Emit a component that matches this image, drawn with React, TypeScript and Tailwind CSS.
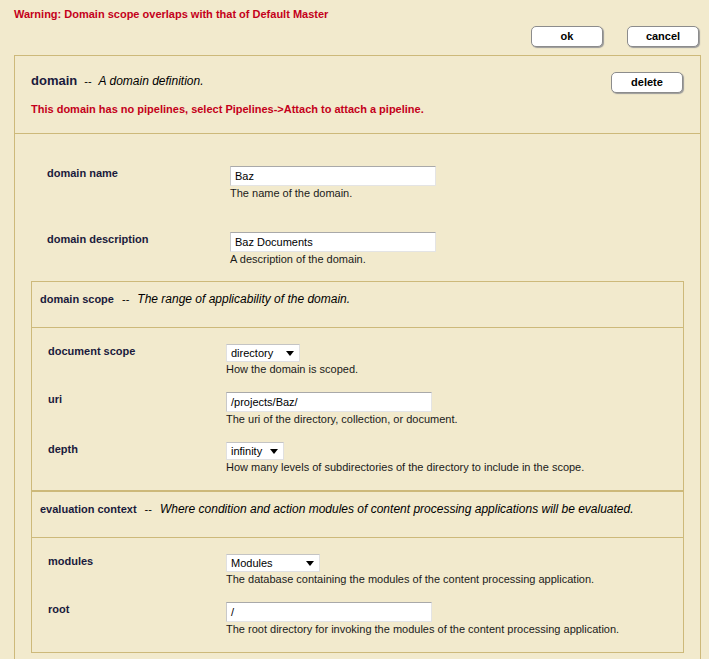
import React from 'react';

const font = { fontFamily: '"Liberation Sans", Arial, sans-serif' };

function Btn({ children }: { children: React.ReactNode }) {
  return (
    <div className="w-[72px] h-[21px] bg-white border border-[#8c8c8c] rounded-[5px] shadow-[1px_1px_1px_#9a9a9a] flex items-center justify-center text-[11px] font-bold text-black">
      {children}
    </div>
  );
}

function TextBox({ value, width = 206 }: { value: string; width?: number }) {
  return (
    <div
      className="h-[20px] bg-white border border-[#e4e4e4] border-t-[#a9a9a9] border-l-[#c9c9c9] flex items-center pl-[4px] text-[11px] text-black"
      style={{ width }}
    >
      {value}
    </div>
  );
}

function Select({ value, width }: { value: string; width: number }) {
  return (
    <div
      className="h-[18px] bg-white border border-[#e0e0e0] border-t-[#c4c4c4] flex items-center justify-between pl-[4px] pr-[5px] text-[11px] text-black"
      style={{ width }}
    >
      <span>{value}</span>
      <svg width="8" height="5" viewBox="0 0 8 5">
        <path d="M0 0h8L4 5z" fill="#000" />
      </svg>
    </div>
  );
}

function Field({
  label,
  help,
  labelWidth,
  children,
}: {
  label: string;
  help: string;
  labelWidth: number;
  children: React.ReactNode;
}) {
  return (
    <div className="flex">
      <div className="text-[11px] font-bold text-[#1a1a3c] leading-[13px] pt-[1px]" style={{ width: labelWidth }}>
        {label}
      </div>
      <div className="flex flex-col">
        {children}
        <div className="text-[11px] leading-[13px] mt-[1px] text-[#1a1a1a]">{help}</div>
      </div>
    </div>
  );
}

function SubPanel({
  title,
  desc,
  children,
}: {
  title: string;
  desc: string;
  children: React.ReactNode;
}) {
  return (
    <div className="border border-[#cdb97a]">
      <div className="h-[46px] pt-[10px] pl-[8px] border-b border-[#cdb97a] flex items-baseline leading-[14px]">
        <span className="text-[11px] font-bold text-[#1a1a3c]">{title}</span>
        <span className="text-[11px] text-black mx-[8px]">--</span>
        <span className="text-[12px] italic text-black">{desc}</span>
      </div>
      <div className="pl-[16px] pt-[16px] pb-[16px] flex flex-col gap-[16px]">{children}</div>
    </div>
  );
}

export default function App() {
  return (
    <div className="min-h-screen bg-[#f2eacd] overflow-hidden" style={font}>
      <div className="pl-[14px] pt-[8px] text-[11px] leading-[13px] font-bold text-[#c4001a]">
        Warning: Domain scope overlaps with that of Default Master
      </div>
      <div className="flex justify-end gap-[24px] pr-[10px] mt-[5px]">
        <Btn>ok</Btn>
        <Btn>cancel</Btn>
      </div>

      <div className="ml-[14px] mr-[8px] mt-[8px] border border-[#cdb97a]">
        {/* header */}
        <div className="flex justify-between border-b border-[#cdb97a] h-[78px]">
          <div className="pl-[16px] pt-[17px]">
            <div className="flex items-baseline leading-[15px]">
              <span className="text-[13px] font-bold text-[#1a1a3c]">domain</span>
              <span className="text-[11px] text-black mx-[7px]">--</span>
              <span className="text-[12px] italic text-black">A domain definition.</span>
            </div>
            <div className="mt-[14px] text-[11px] leading-[13px] font-bold text-[#c4001a]">
              This domain has no pipelines, select Pipelines-&gt;Attach to attach a pipeline.
            </div>
          </div>
          <div className="pr-[17px] pt-[16px]">
            <Btn>delete</Btn>
          </div>
        </div>

        {/* body */}
        <div className="px-[16px] pt-[32px] pb-[16px]">
          <div className="pl-[16px] flex flex-col gap-[32px]">
            <Field label="domain name" help="The name of the domain." labelWidth={183}>
              <TextBox value="Baz" />
            </Field>
            <Field label="domain description" help="A description of the domain." labelWidth={183}>
              <TextBox value="Baz Documents" />
            </Field>
          </div>

          <div className="mt-[15px]">
            <SubPanel title="domain scope" desc="The range of applicability of the domain.">
              <Field label="document scope" help="How the domain is scoped." labelWidth={178}>
                <Select value="directory" width={74} />
              </Field>
              <Field label="uri" help="The uri of the directory, collection, or document." labelWidth={178}>
                <TextBox value="/projects/Baz/" />
              </Field>
              <Field
                label="depth"
                help="How many levels of subdirectories of the directory to include in the scope."
                labelWidth={178}
              >
                <Select value="infinity" width={58} />
              </Field>
            </SubPanel>
            <SubPanel
              title="evaluation context"
              desc="Where condition and action modules of content processing applications will be evaluated."
            >
              <Field
                label="modules"
                help="The database containing the modules of the content processing application."
                labelWidth={178}
              >
                <Select value="Modules" width={94} />
              </Field>
              <Field
                label="root"
                help="The root directory for invoking the modules of the content processing application."
                labelWidth={178}
              >
                <TextBox value="/" />
              </Field>
            </SubPanel>
          </div>
        </div>
      </div>
    </div>
  );
}
